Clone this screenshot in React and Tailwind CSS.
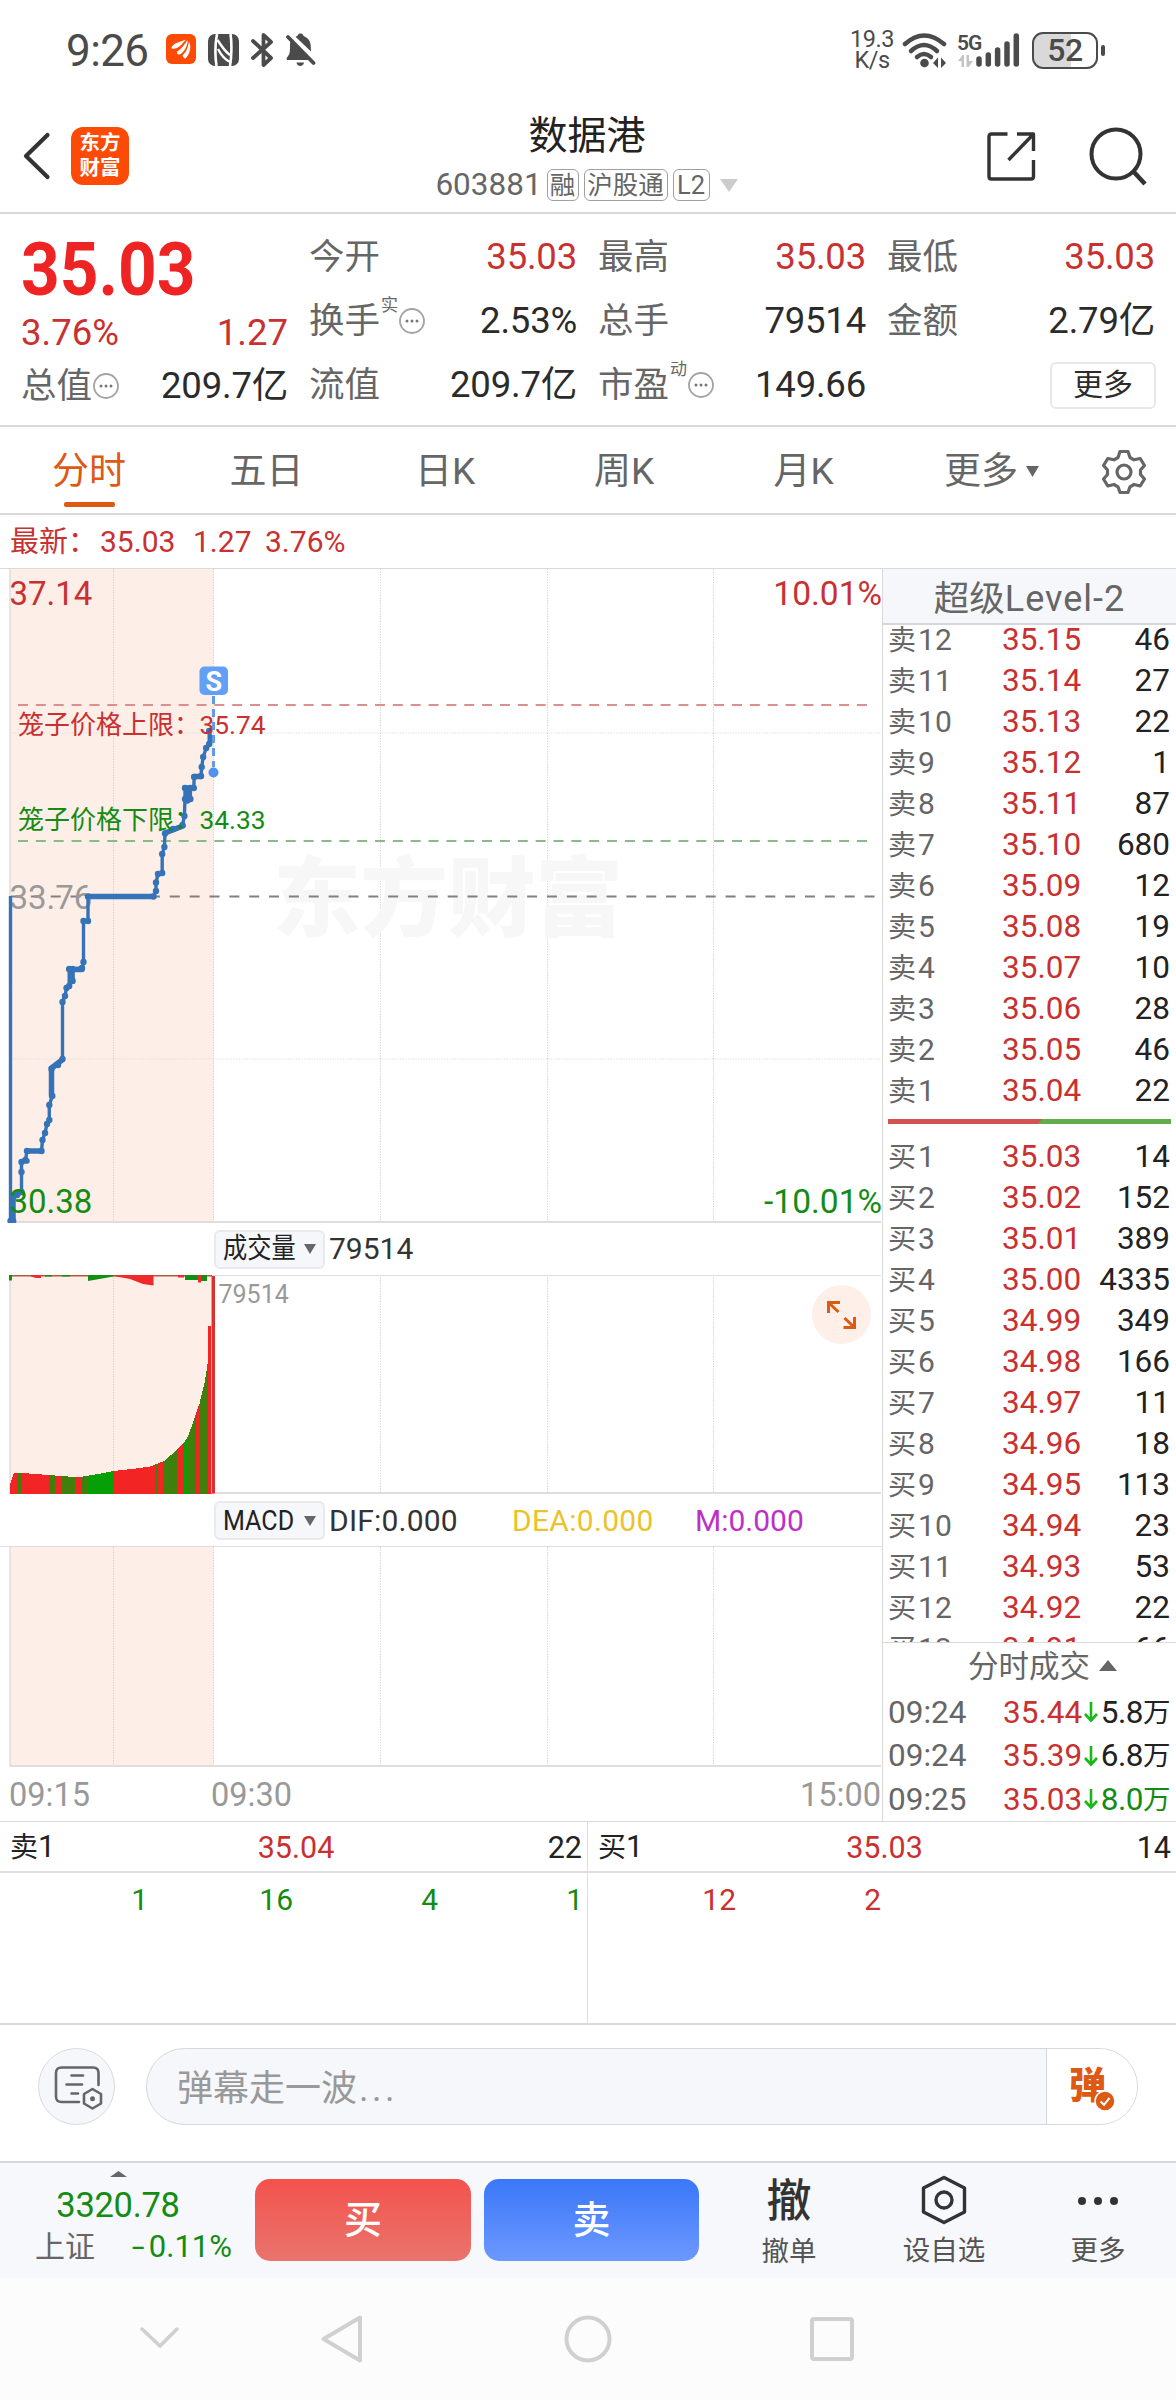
import React from "react";

const RED = "#c93030";
const GREEN = "#148c14";

/* ---------- small shared pieces ---------- */

function Dots({ className = "" }) {
  return (
    <svg className={`h-[26px] w-[26px] shrink-0 ${className}`} viewBox="0 0 26 26" fill="none">
      <circle cx="13" cy="13" r="12" stroke="#a3a3a3" strokeWidth="1.8" />
      <circle cx="8" cy="13" r="1.5" fill="#777" />
      <circle cx="13" cy="13" r="1.5" fill="#777" />
      <circle cx="18" cy="13" r="1.5" fill="#777" />
    </svg>
  );
}

function Down({ w, h, color = "#666", className = "" }) {
  return (
    <svg width={w} height={h} viewBox="0 0 10 10" preserveAspectRatio="none" className={className}>
      <path d="M0 0H10L5 10Z" fill={color} />
    </svg>
  );
}

function Up({ w, h, color = "#666", className = "" }) {
  return (
    <svg width={w} height={h} viewBox="0 0 10 10" preserveAspectRatio="none" className={className}>
      <path d="M0 10H10L5 0Z" fill={color} />
    </svg>
  );
}

/* ---------- status bar ---------- */

function StatusBar() {
  return (
    <div className="flex h-[100px] items-center justify-between pl-[66px] pr-[71px] text-[#4b4b4b]">
      <div className="flex h-[36px] items-center">
        <span className="w-[100px] pt-[2px] text-[44px] leading-[36px] tracking-[-0.6px]">9:26</span>
        <svg width="30" height="30" viewBox="0 0 30 30" className="-mt-[2px]">
          <rect width="30" height="30" rx="6" fill="#fd4a05" />
          <path d="M5.500 13.500C8 8 15 8 20 5.500C17 8.500 14 14 8 14.800C6.500 15 5.500 14.600 5.500 13.500Z" fill="#fff" />
          <path d="M11 17.500C16 15 18.500 10 21.500 6C22 11 18 19 13.500 20.500C11.500 21 10.500 19 11 17.500Z" fill="#fff" />
          <path d="M23 7.500C26 13 23.500 21 19 25C18.500 23.500 17 23.500 16.500 21.500C20.500 18 22 13 23 7.500Z" fill="#fff" />
        </svg>
        <svg width="31" height="32" viewBox="0 0 31 32" className="-mt-[1px] ml-[12px]">
          <rect width="31" height="32" rx="7" fill="#4b4b4b" />
          <path d="M9 0C7.500 8 7 22 8.500 32M22.500 0C24 9 23.500 24 22 32" stroke="#fff" strokeWidth="2.600" fill="none" />
          <path d="M9.500 6C14 13 19 19 22 21M10 15C13 21 18 26 22 28" stroke="#fff" strokeWidth="2.400" fill="none" />
        </svg>
        <svg width="24" height="36" viewBox="0 0 24 36" className="ml-[12px]" fill="none" stroke="#4b4b4b" strokeWidth="3.800" strokeLinejoin="round" strokeLinecap="round">
          <path d="M2 9L20 26L12.500 33V3L20 10L2 26" />
        </svg>
        <svg width="31" height="34" viewBox="0 0 31 34" className="ml-[10px]">
          <path d="M2 27H26L5.500 7.500C5 9.500 5 12 5 14C5 20 4.500 22 1.500 25Z" fill="#4b4b4b" />
          <path d="M10.500 3.800C12 3.200 12.700 3 13 1.800C14 0 17 0 18 1.800C18.300 3 19 3.300 20.500 4C25 6.500 26 10 26 18.500Z" fill="#4b4b4b" />
          <path d="M3 4L28.500 30" stroke="#4b4b4b" strokeWidth="3.800" strokeLinecap="round" />
          <path d="M11.500 29.500H19C18.500 34 12 34 11.500 29.500Z" fill="#4b4b4b" />
        </svg>
      </div>
      <div className="flex h-[38px] items-center">
        <div className="flex w-[42px] flex-col items-center text-[23.500px] leading-[21px] tracking-[-0.500px]">
          <span>19.3</span>
          <span>K/s</span>
        </div>
        <svg width="46" height="36" viewBox="0 0 46 36" className="ml-[9px]" fill="none" stroke="#4b4b4b" strokeWidth="4.500" strokeLinecap="round">
          <path d="M3 12Q22 -5 42 12" />
          <path d="M9 19Q22 7 35 19" />
          <path d="M15 25Q22 19 29 25" />
          <circle cx="22.500" cy="31" r="4.300" fill="#4b4b4b" stroke="none" />
          <path d="M31 31L36 25.500V36ZM44 31L39 25.500V36Z" fill="#4b4b4b" stroke="none" />
        </svg>
        <div className="ml-[9px] flex h-[36px] w-[24px] flex-col">
          <span className="text-[21px] font-semibold leading-[22px] tracking-[-1px]">5G</span>
          <svg width="15" height="12" viewBox="0 0 15 12" className="ml-[1px] mt-[1px]" fill="#c4c4c4">
            <path d="M0 6L4.500 0H6V12H3.500V6ZM15 6L10.500 12H8.500V0H11V6Z" />
          </svg>
        </div>
        <svg width="44" height="34" viewBox="0 0 44 34" className="-ml-[5px]" stroke="#4b4b4b" strokeWidth="5.500" strokeLinecap="round">
          <path d="M3 26V31M12.300 22V31M21.600 17V31M31 11V31M40.300 3V31" />
        </svg>
        <div className="ml-[12px] flex h-[37px] w-[66px] items-center justify-center rounded-[11px] border-[2.500px] border-[#4b4b4b] bg-[linear-gradient(90deg,#d9d9d9_60%,#fff_60%)]">
          <span className="text-[32px] font-medium leading-[32px] tracking-[-0.500px]">52</span>
        </div>
        <div className="ml-[3px] h-[11px] w-[4px] rounded-[2px] bg-[#4b4b4b]" />
      </div>
    </div>
  );
}

/* ---------- title bar ---------- */

function Badge({ children, className }) {
  return (
    <span className={`flex h-[32px] items-center justify-center rounded-[6px] border-[1.500px] border-[#a0a0a0] text-[25.500px] leading-[28px] ${className}`}>
      {children}
    </span>
  );
}

function TitleBar() {
  return (
    <div className="flex h-[114px] items-start justify-between border-b-2 border-[#dadada] pl-[22px] pr-[28px]">
      <div className="mt-[27px] flex w-[300px] items-center">
        <svg width="30" height="50" viewBox="0 0 30 50" fill="none" stroke="#333" strokeWidth="4.200" strokeLinecap="round" strokeLinejoin="round">
          <path d="M25.500 4L4 25L25.500 46" />
        </svg>
        <div className="ml-[19px] flex h-[58px] w-[58px] flex-col items-center justify-center rounded-[12px] bg-[#fd4a05] text-[20.500px] font-bold leading-[25px] text-white">
          <span>东方</span>
          <span>财富</span>
        </div>
      </div>
      <div className="flex flex-col items-center">
        <h1 className="ml-[4px] mt-[14px] text-[39px] leading-[44px] text-[#222]">数据港</h1>
        <div className="ml-[3px] mt-[11px] flex h-[32px] items-center text-[#666]">
          <span className="mr-[5px] text-[31.500px] leading-[32px]">603881</span>
          <Badge className="mr-[5px] w-[32px]">融</Badge>
          <Badge className="mr-[5px] w-[84px]">沪股通</Badge>
          <Badge className="mr-[10px] w-[37px]">L2</Badge>
          <Down w={18} h={13} color="#ccc" />
        </div>
      </div>
      <div className="mt-[26px] flex w-[300px] items-center justify-end">
        <svg width="50" height="50" viewBox="0 0 50 50" fill="none" stroke="#333" strokeWidth="3.400" strokeLinejoin="round">
          <path d="M21.500 3H5.500Q3 3 3 5.500V45.500Q3 48 5.500 48H45Q47.500 48 47.500 45.500V29" />
          <path d="M31 3H47.500V20M47.500 3L22.500 29" />
        </svg>
        <svg width="60" height="60" viewBox="0 0 60 60" className="ml-[52px]" fill="none" stroke="#333" strokeWidth="4">
          <circle cx="28" cy="28" r="24.500" />
          <path d="M45 45L57 58" strokeWidth="4.500" />
        </svg>
      </div>
    </div>
  );
}

/* ---------- quote summary ---------- */

function Stat({ label, sup, dots, value, tone = "text-[#2b2b2b]", width = "w-[268px]" }) {
  return (
    <div className={`flex h-[64px] items-center justify-between ${width}`}>
      <span className="flex items-center text-[35.500px] leading-[40px] text-[#666]">
        {label}
        {sup && <span className="-mt-[32px] ml-[1px] text-[17px] leading-[18px]">{sup}</span>}
        {dots && <Dots className="ml-[1px]" />}
      </span>
      <span className={`text-[36.500px] leading-[40px] tracking-[-0.200px] ${tone}`}>{value}</span>
    </div>
  );
}

function Summary() {
  const r = "text-[#c93030]";
  return (
    <div className="flex h-[213px] border-b-2 border-[#dadada] pl-[21px]">
      <div className="flex w-[267px] flex-col">
        <div className="mt-[23px] h-[64px] text-[75px] font-bold leading-[64px] text-[#ee2424]">
          <span className="inline-block origin-left scale-x-[0.900]">35.03</span>
        </div>
        <div className="mt-[12px] flex h-[40px] items-center justify-between text-[36.500px] leading-[40px] text-[#c93030]">
          <span>3.76%</span>
          <span>1.27</span>
        </div>
        <div className="mt-[1px]">
          <Stat label="总值" dots value="209.7亿" width="w-[267px]" />
        </div>
      </div>
      <div className="ml-[21px] mt-[11px] grid h-[192px] grid-cols-[268px_268px_268px] gap-x-[21px]">
        <Stat label="今开" value="35.03" tone={r} />
        <Stat label="最高" value="35.03" tone={r} />
        <Stat label="最低" value="35.03" tone={r} />
        <Stat label="换手" sup="实" dots value="2.53%" />
        <Stat label="总手" value="79514" />
        <Stat label="金额" value="2.79亿" />
        <Stat label="流值" value="209.7亿" />
        <Stat label="市盈" sup="动" dots value="149.66" />
        <div className="flex h-[64px] items-center justify-end">
          <button className="-mr-[1px] flex h-[47px] w-[106px] items-center justify-center rounded-[6px] border-2 border-[#e8e8e8] text-[30px] leading-[36px] text-[#2b2b2b]">更多</button>
        </div>
      </div>
    </div>
  );
}

/* ---------- period tabs ---------- */

function Tabs() {
  return (
    <div className="flex h-[88px] items-center border-b-2 border-[#dadada] pt-[3px] text-[37px] leading-[44px] text-[#666]">
      <div className="flex w-[178px] flex-col items-center pt-[13px] text-[#dc5a14]">
        <span>分时</span>
        <span className="mt-[8px] h-[5px] w-[51px] rounded-[2px] bg-[#dc5a14]" />
      </div>
      <span className="w-[177px] text-center">五日</span>
      <span className="w-[180px] text-center">日K</span>
      <span className="w-[178px] text-center">周K</span>
      <span className="w-[181px] text-center">月K</span>
      <span className="ml-[50px] flex w-[140px] items-center">
        更多
        <Down w={13} h={11} className="ml-[8px]" />
      </span>
      <svg width="46" height="46" viewBox="0 0 46 46" className="ml-[17px]" fill="none" stroke="#666" strokeWidth="3.200" strokeLinejoin="round">
        <path d="M19 2.500H27L29 8.500L33 10.800L39.200 9.500L43.500 16.500L39.500 21V25.500L43.500 30L39.200 37L33 35.500L29 37.800L27 43.500H19L17 37.800L13 35.500L6.800 37L2.500 30L6.500 25.500V21L2.500 16.500L6.800 9.500L13 10.800L17 8.500Z" />
        <circle cx="23" cy="23" r="7" />
      </svg>
    </div>
  );
}

/* ---------- charts ---------- */

const GRID_X = [113.5, 380.5, 547.5, 713.5];

function Grid({ height, rows = [] }) {
  return (
    <g>
      <rect x="10" y="0" width="203.500" height={height} fill="#fdeee7" />
      {[...GRID_X, 213.5].map((x) => (
        <line key={x} x1={x} x2={x} y1="0" y2={height} stroke="#d2d2d2" strokeDasharray="1.300 1.300" />
      ))}
      {rows.map((y) => (
        <line key={y} x1="10" x2="881" y1={y} y2={y} stroke="#dcdcdc" strokeDasharray="1.300 1.300" />
      ))}
      <line x1="10" x2="10" y1="0" y2={height} stroke="#dedede" strokeWidth="1.500" />
      <line x1="10" x2="881" y1={height - 1} y2={height - 1} stroke="#dedede" strokeWidth="1.800" />
    </g>
  );
}

const PRICE = [
  [10.5, 327], [10.5, 652], [13.2, 652], [13.2, 628], [17, 626], [21.5, 623], [21.5, 603], [21.5, 593], [25.5, 591],
  [27, 582], [41.5, 582], [42.5, 571], [45, 564], [47, 555], [49.3, 551], [49.3, 536], [52.3, 527], [51.5, 500],
  [58, 496], [62.5, 490], [62.5, 433], [65, 427], [66.5, 419], [69.2, 417], [69.2, 400], [72.6, 412], [72.6, 400],
  [82, 399], [83.5, 393], [83.5, 352], [88, 352], [88, 327.5], [153.5, 327.5], [156, 322], [156, 313.5], [158, 305],
  [162.2, 304], [162.2, 285], [164.4, 278], [165, 264.5], [173, 260], [182.5, 256], [184.4, 247], [185, 230],
  [185, 219], [190.4, 230], [190.4, 219], [193.8, 219], [194.2, 208], [201, 207], [201.7, 198], [203.2, 188],
  [206.2, 179], [209.2, 175], [209.2, 162], [211.5, 171],
];

const BANDS = "M88 327.500H153M27 582H41M69 400.500H82M51.500 500V527M51.500 499L62 491M165 264L183 257M187.500 219V232M185 219H193M194 207.500H201M13 628L21 623M13 630V652M72 400V412M24 592H27";

function PriceChart() {
  return (
    <svg width="882" height="654" viewBox="0 0 882 654" className="block">
      <Grid height={654} rows={[164, 490]} />
      <text x="273" y="361" fontSize="87.500" fontWeight="900" fill="#f7f7f7">东方财富</text>
      <line x1="18" x2="873" y1="136" y2="136" stroke="#dd8f8f" strokeWidth="2" strokeDasharray="10 7.850" />
      <line x1="18" x2="873" y1="272" y2="272" stroke="#86bd86" strokeWidth="2" strokeDasharray="10 7.850" />
      <line x1="11" x2="881" y1="327.500" y2="327.500" stroke="#808080" strokeWidth="1.800" strokeDasharray="10 9.850" />
      <text x="9.500" y="340" fontSize="33" fill="#999">33.76</text>
      <polyline points={PRICE.map((p) => p.join(",")).join(" ")} fill="none" stroke="#3573b9" strokeWidth="3.400" strokeLinejoin="round" />
      <path d={BANDS} stroke="#3573b9" strokeWidth="5.500" strokeLinecap="round" fill="none" />
      {PRICE.slice(1).map(([x, y], i) => (
        <circle key={i} cx={x} cy={y} r="3.200" fill="#3573b9" />
      ))}
      <text x="9.500" y="36" fontSize="33" fill={RED}>37.14</text>
      <text x="882" y="36" fontSize="33.500" fill={RED} textAnchor="end">10.01%</text>
      <text x="9.500" y="644" fontSize="33" fill={GREEN}>30.38</text>
      <text x="882" y="644" fontSize="33.500" fill={GREEN} textAnchor="end">-10.01%</text>
      <text x="18" y="165" fontSize="26" fill={RED}>笼子价格上限：</text>
      <text x="199.500" y="164.500" fontSize="26.300" fill={RED}>35.74</text>
      <text x="18" y="260" fontSize="26" fill={GREEN}>笼子价格下限：</text>
      <text x="199.500" y="259.500" fontSize="26.300" fill={GREEN}>34.33</text>
      <line x1="213.500" x2="213.500" y1="127" y2="198" stroke="#5f9bea" strokeWidth="3" strokeDasharray="8 5" />
      <circle cx="213.500" cy="203.500" r="5" fill="#4f92f0" />
      <rect x="199.500" y="97.500" width="28.500" height="28.500" rx="5" fill="#629ff5" />
      <text x="213.700" y="121.500" fontSize="27" fontWeight="700" fill="#fff" textAnchor="middle">S</text>
    </svg>
  );
}

/* Height of the volume area along x, measured up from the baseline. */
const VOLUME = [
  [10, 9], [14, 21], [22, 20.5], [49, 18.5], [68, 17], [83, 17], [98, 19.5], [113, 22.5], [132, 24.5], [150, 27],
  [165, 33], [177, 44], [184, 51], [188, 57], [194, 74], [199.5, 90], [205, 113], [208, 133], [208.5, 167.5], [215, 167.5],
];
const TONES = [
  [16.500, "r"], [22, "m"], [48.500, "r"], [54.500, "m"], [62, "r"], [75, "m"], [82, "r"], [86.500, "m"], [113.300, "g"], [156, "r"],
  [158, "m"], [163, "r"], [177, "m"], [182.500, "r"], [188, "g"], [195.500, "m"], [200, "r"], [207.500, "m"], [216, "r"],
];

function volumeAt(x) {
  for (let i = 1; i < VOLUME.length; i++) {
    const [x0, h0] = VOLUME[i - 1];
    const [x1, h1] = VOLUME[i];
    if (x <= x1) return h0 + ((h1 - h0) * (x - x0)) / (x1 - x0);
  }
  return 0;
}

function VolumeChart() {
  const bars = [];
  for (let i = 0, x = 10; x < 212; i++, x += 1) {
    const tone = TONES.find(([end]) => x < end)[1];
    const mixed = ["#3f800c", "#3f800c", "#3f800c", "#a84a18"][i % 4];
    bars.push({ x, h: volumeAt(x + 0.5), fill: tone === "r" ? "#f22424" : tone === "g" ? "#06a006" : mixed });
  }
  return (
    <svg width="882" height="219" viewBox="0 0 882 219" className="block">
      <Grid height={219} />
      <line x1="10" x2="881" y1="0.500" y2="0.500" stroke="#dedede" />
      {bars.map((b) => (
        <rect key={b.x} x={b.x} y={218.5 - b.h} width="1" height={b.h} fill={b.fill} shapeRendering="crispEdges" />
      ))}
      <rect x="211" y="1" width="1" height="217.500" fill="#ef9a90" />
      <rect x="212" y="1" width="3" height="217.500" fill="#d93030" />
      <path d="M9 0H212V1.500H9Z" fill="#b05a3a" />
      <path d="M9 0H12V5.500H9ZM45 0H52V1.500H45ZM88 0H113.500V1.500L88 6ZM185 0H207V6H201V4H198V5H185ZM62 0H70V1.500H62Z" fill="#139013" />
      <path d="M31 0H41V3H36L31 1.500ZM113.500 0H153.500V10.500L143 9L130 4L113.500 1ZM198 0H201V7.500H198ZM178 0H184V2.500H178Z" fill="#ee2a2a" />
      <text x="218.500" y="28" fontSize="25" fill="#999">79514</text>
      <circle cx="841.500" cy="39.500" r="29.500" fill="#fef0e8" />
      <path d="M828.500 38V27.500H840M829 28L838.500 37M843.500 52.500H854.500V42M854 52L844.500 43" fill="none" stroke="#dc5a14" strokeWidth="3" />
    </svg>
  );
}

function Picker({ children, scale }) {
  return (
    <div className="flex h-[39px] w-[111px] shrink-0 items-center rounded-[6px] border-2 border-[#e9eaee] bg-[#f6f7fa] pl-[7px] text-[28.500px] leading-[34px] text-[#222]">
      <span className="w-[81px] whitespace-nowrap">
        <span className={`inline-block origin-left ${scale}`}>{children}</span>
      </span>
      <Down w={12} h={10} />
    </div>
  );
}

function Charts() {
  return (
    <div className="flex w-[883px] flex-col border-r-[1.500px] border-[#dadada]">
      <PriceChart />
      <div className="flex h-[52px] items-center pl-[214px] text-[30px] leading-[36px] text-[#333]">
        <Picker scale="scale-x-[0.850]">成交量</Picker>
        <span className="ml-[4px]">79514</span>
      </div>
      <VolumeChart />
      <div className="flex h-[53px] items-center border-b-[1.500px] border-[#dedede] pl-[214px] pt-[1px] text-[30px] leading-[36px]">
        <Picker scale="scale-x-[0.880]">MACD</Picker>
        <span className="ml-[4px] w-[183px] tracking-[0.200px] text-[#333]">DIF:0.000</span>
        <span className="w-[183px] tracking-[0.300px] text-[#eac32c]">DEA:0.000</span>
        <span className="text-[#bd30c8]">M:0.000</span>
      </div>
      <svg width="882" height="220" viewBox="0 0 882 220" className="block">
        <Grid height={220} />
      </svg>
      <div className="flex h-[54px] items-center pl-[9px] pr-[1px] pt-[2px] text-[32.500px] leading-[40px] text-[#999]">
        <span className="w-[202px]">09:15</span>
        <span>09:30</span>
        <span className="ml-auto">15:00</span>
      </div>
    </div>
  );
}

/* ---------- order book ---------- */

const SELL = [
  ["卖12", "35.15", "46"], ["卖11", "35.14", "27"], ["卖10", "35.13", "22"], ["卖9", "35.12", "1"],
  ["卖8", "35.11", "87"], ["卖7", "35.10", "680"], ["卖6", "35.09", "12"], ["卖5", "35.08", "19"],
  ["卖4", "35.07", "10"], ["卖3", "35.06", "28"], ["卖2", "35.05", "46"], ["卖1", "35.04", "22"],
];
const BUY = [
  ["买1", "35.03", "14"], ["买2", "35.02", "152"], ["买3", "35.01", "389"], ["买4", "35.00", "4335"],
  ["买5", "34.99", "349"], ["买6", "34.98", "166"], ["买7", "34.97", "11"], ["买8", "34.96", "18"],
  ["买9", "34.95", "113"], ["买10", "34.94", "23"], ["买11", "34.93", "53"], ["买12", "34.92", "22"],
  ["买13", "34.91", "66"],
];
const TRADES = [
  ["09:24", "35.44", "5.8万", "text-[#222]"],
  ["09:24", "35.39", "6.8万", "text-[#222]"],
  ["09:25", "35.03", "8.0万", "text-[#148c14]"],
];

function Level({ row }) {
  return (
    <div className="flex h-[41px] shrink-0 items-center pl-[5px] pr-[6px] text-[31.500px] leading-[41px]">
      <span className="w-[114px] text-[#666]">
        <span className="text-[28px]">{row[0][0]}</span>
        <span className="ml-[2px] text-[30px]">{row[0].slice(1)}</span>
      </span>
      <span className="text-[#c93030]">{row[1]}</span>
      <span className="ml-auto text-[#222]">{row[2]}</span>
    </div>
  );
}

function OrderBook() {
  return (
    <div className="flex w-[293px] flex-col">
      <div className="h-[56px] shrink-0 border-b-2 border-[#d5d7dc] bg-[#f6f7fa] pt-[3px] text-center text-[35.500px] leading-[54px] text-[#666]">
        超级<span className="text-[36px] tracking-[1px]">Level-2</span>
      </div>
      <div className="flex h-[1018px] flex-col overflow-hidden">
        <div className="-mt-[6px] flex flex-col">
          {SELL.map((r) => (
            <Level key={r[0]} row={r} />
          ))}
        </div>
        <svg width="283" height="5" viewBox="0 0 283 5" className="ml-[5px] mt-[8px] shrink-0">
          <rect width="283" height="5" fill="#62ac4c" />
          <path d="M0 0H154L150 5H0Z" fill="#d35252" />
        </svg>
        <div className="mt-[12px] flex flex-col">
          {BUY.map((r) => (
            <Level key={r[0]} row={r} />
          ))}
        </div>
      </div>
      <div className="flex h-[49px] shrink-0 items-center border-t-[1.500px] border-[#dadada] pl-[85px] pt-[1px] text-[30.500px] leading-[48px] text-[#666]">
        分时成交
        <Up w={18} h={11} className="-mt-[4px] ml-[9px]" />
      </div>
      {TRADES.map((t, i) => (
        <div key={i} className="flex h-[43.500px] shrink-0 items-center pl-[5px] pr-[6px] pt-[1px] text-[31.500px] leading-[42px]">
          <span className="w-[115px] text-[#666]">{t[0]}</span>
          <span className="w-[81px] text-[#c93030]">{t[1]}</span>
          <svg width="14" height="21" viewBox="0 0 14 21" fill="none" stroke="#18b818" strokeWidth="2.600">
            <path d="M7 0V18M1 12L7 18.500L13 12" />
          </svg>
          <span className={`ml-auto flex tracking-[-0.500px] ${t[3]}`}>
            {t[2].slice(0, -1)}
            <span className="text-[27.500px]">{t[2].slice(-1)}</span>
          </span>
        </div>
      ))}
    </div>
  );
}

/* ---------- depth queue ---------- */

function Queue({ label, price, qty, cells, tone, className }) {
  return (
    <div className={`flex w-[588px] flex-col ${className}`}>
      <div className="flex h-[51px] items-center justify-between border-b-2 border-[#dedede] pl-[10px] pr-[5px] pt-[2px] text-[30.500px] leading-[48px] text-[#222]">
        <span className="w-[120px]">
          <span className="text-[28px]">{label}</span>1
        </span>
        <span className="text-[#c93030]">{price}</span>
        <span className="w-[120px] text-right">{qty}</span>
      </div>
      <div className={`flex h-[54px] items-center pl-[3px] text-[30px] leading-[54px] ${tone}`}>
        {cells.map((c, i) => (
          <span key={i} className="w-[145px] text-right">{c}</span>
        ))}
      </div>
    </div>
  );
}

/* ---------- comment bar ---------- */

function CommentBar() {
  return (
    <div className="flex h-[138px] items-start border-b-2 border-[#d5d7dc] pl-[38px] pt-[23px]">
      <div className="flex h-[77px] w-[77px] items-center justify-center rounded-full border-[1.500px] border-[#d8dae0] bg-[#f6f7fa]">
        <svg width="50" height="46" viewBox="0 0 50 46" fill="none" stroke="#666" strokeWidth="2.600" strokeLinecap="round" className="ml-[2px] mt-[3px]">
          <path d="M26 37H8.500Q3 37 3 31.500V8Q3 2.500 8.500 2.500H40Q45.500 2.500 45.500 8V20" />
          <path d="M18.500 10.500H30M13.500 19.500H29M18.500 28.500H25" />
          <path d="M39.500 24L48 29V38.500L39.500 43.500L31 38.500V29Z" strokeLinejoin="round" />
          <circle cx="39.500" cy="33.700" r="2.500" fill="#666" stroke="none" />
        </svg>
      </div>
      <div className="ml-[31px] flex h-[77px] w-[992px] overflow-hidden rounded-full border-[1.500px] border-[#d5d7de] bg-[#f6f7fa]">
        <span className="w-[899px] pl-[30px] pt-[2px] text-[36px] leading-[76px] text-[#999]">
          弹幕走一波<span className="pl-[2px] tracking-[3.500px]">...</span>
        </span>
        <div className="relative flex-1 border-l-[1.500px] border-[#d5d7de] bg-white">
          <span className="absolute left-[22px] top-[18px] text-[37px] font-black leading-[40px] text-[#dc5a14]">弹</span>
          <svg width="22" height="22" viewBox="0 0 22 22" className="absolute left-[47px] top-[41px]">
            <circle cx="11" cy="11" r="10" fill="#dc5a14" stroke="#fff" strokeWidth="1.500" />
            <path d="M6.500 11.500L10 14.800L15.500 8" stroke="#fff" strokeWidth="2" fill="none" />
          </svg>
        </div>
      </div>
    </div>
  );
}

/* ---------- trade bar ---------- */

function Action({ icon, label, className }) {
  return (
    <div className={`flex flex-col items-center ${className}`}>
      <div className="flex h-[50px] items-center">{icon}</div>
      <span className="mt-[9px] text-[27.500px] leading-[34px] text-[#555]">{label}</span>
    </div>
  );
}

function TradeBar() {
  return (
    <div className="flex h-[115px] bg-[#f6f8fb]">
      <div className="flex w-[236px] flex-col items-center">
        <Up w={17} h={6} className="mt-[8px]" />
        <span className="mt-[8px] text-[34.500px] leading-[40px] tracking-[-0.300px] text-[#148c14]">3320.78</span>
        <div className="mt-[5px] flex w-full items-center justify-between pl-[35px] pr-[4px] text-[30px] leading-[34px]">
          <span className="text-[#666]">上证</span>
          <span className="text-[31px] text-[#148c14]"><span className="mr-[4px] inline-block origin-right scale-x-[1.500]">-</span>0.11%</span>
        </div>
      </div>
      <button className="ml-[19px] mt-[16px] h-[82px] w-[216px] rounded-[15px] bg-linear-to-b from-[#f4514c] to-[#e9736d] pt-[1px] text-[38px] font-medium leading-[81px] text-white">买</button>
      <button className="ml-[13px] mt-[16px] h-[82px] w-[215px] rounded-[15px] bg-linear-to-b from-[#3a77f8] to-[#6c98ff] pt-[1px] text-[38px] font-medium leading-[81px] text-white">卖</button>
      <div className="flex pt-[12px]">
        <Action className="ml-[29px] w-[122px] pt-[1px]" label="撤单" icon={<span className="pt-[2px] text-[45px] font-medium leading-[50px] text-[#333]">撤</span>} />
        <Action
          className="ml-[24px] w-[140px]"
          label="设自选"
          icon={
            <svg width="46" height="50" viewBox="0 0 46 50" fill="none" stroke="#333" strokeWidth="3.400" strokeLinejoin="round">
              <path d="M23 2.500L43.500 13V37L23 47.500L2.500 37V13Z" />
              <circle cx="23" cy="25" r="8" />
            </svg>
          }
        />
        <Action
          className="ml-[24px] w-[120px]"
          label="更多"
          icon={
            <svg width="40" height="10" viewBox="0 0 40 10" fill="#333" className="mt-[2px]">
              <circle cx="4" cy="5" r="4" />
              <circle cx="20" cy="5" r="4" />
              <circle cx="36" cy="5" r="4" />
            </svg>
          }
        />
      </div>
    </div>
  );
}

function NavBar() {
  return (
    <div className="flex h-[122px] items-center bg-[#fcfcfc] pl-[139px]">
      <svg width="42" height="26" viewBox="0 0 42 26" fill="none" stroke="#d0d0d0" strokeWidth="3.500" strokeLinecap="round" className="-mt-[2px]">
        <path d="M3 4L21 21L38 4" />
      </svg>
      <svg width="44" height="50" viewBox="0 0 44 50" fill="none" stroke="#d0d0d0" strokeWidth="4" strokeLinejoin="round" className="ml-[139px]">
        <path d="M40 3.500V46.500L3.500 25Z" />
      </svg>
      <svg width="48" height="48" viewBox="0 0 48 48" fill="none" stroke="#d0d0d0" strokeWidth="4" className="ml-[200px]">
        <circle cx="24" cy="24" r="21.500" />
      </svg>
      <svg width="44" height="44" viewBox="0 0 44 44" fill="none" stroke="#d0d0d0" strokeWidth="4" className="ml-[198px]">
        <rect x="2" y="2" width="40" height="40" rx="2" />
      </svg>
    </div>
  );
}

export default function App() {
  return (
    <div className="flex h-[2400px] w-[1176px] flex-col overflow-hidden bg-white font-[Roboto,'Noto_Sans_CJK_SC',sans-serif]">
      <StatusBar />
      <TitleBar />
      <Summary />
      <Tabs />
      <div className="h-[54px] border-b-[1.500px] border-[#dadada] pl-[10px] text-[30px] leading-[53px] text-[#c93030]">
        <span className="inline-block w-[90px] text-[29px]">最新：</span>
        <span className="inline-block w-[93px]">35.03</span>
        <span className="inline-block w-[72px]">1.27</span>
        <span>3.76%</span>
      </div>
      <div className="flex h-[1253px] border-b-[1.500px] border-[#dadada]">
        <Charts />
        <OrderBook />
      </div>
      <div className="flex h-[203px] border-b-2 border-[#dadada]">
        <Queue label="卖" price="35.04" qty="22" cells={["1", "16", "4", "1"]} tone="text-[#148c14]" className="border-r-[1.500px] border-[#dedede]" />
        <Queue label="买" price="35.03" qty="14" cells={["12", "2"]} tone="text-[#c93030]" className="" />
      </div>
      <CommentBar />
      <TradeBar />
      <NavBar />
    </div>
  );
}
